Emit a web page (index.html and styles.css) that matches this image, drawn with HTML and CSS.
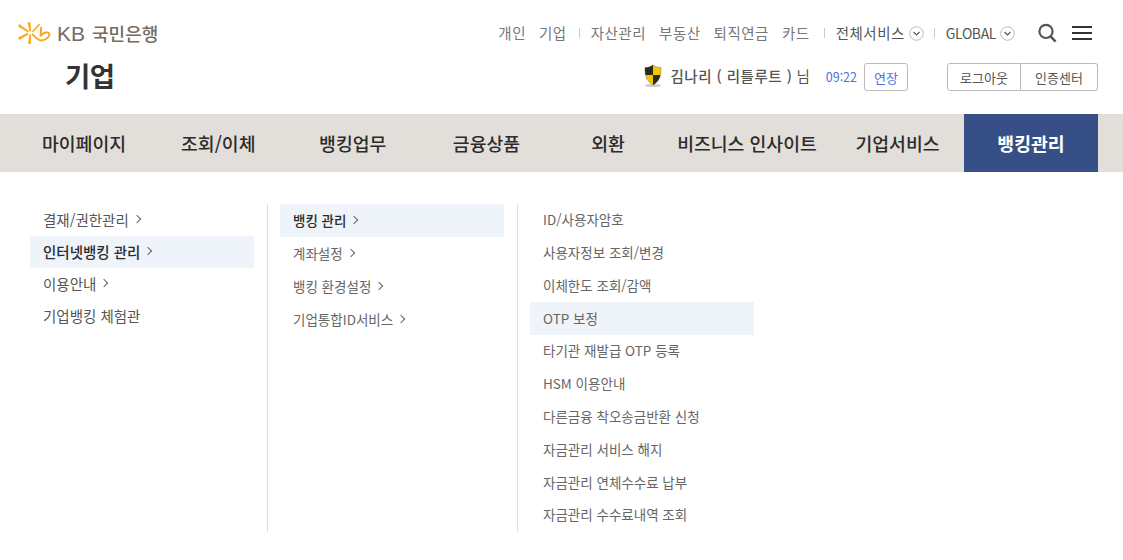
FILE: index.html
```html
<!DOCTYPE html>
<html lang="ko">
<head>
<meta charset="utf-8">
<title>KB국민은행 기업</title>
<link rel="stylesheet" href="styles.css">
</head>
<body>
<header class="header">
  <div class="brand">
    <div class="logo">
      <svg class="logo-mark" width="33" height="22" viewBox="0 0 33 22" aria-hidden="true">
        <g fill="#f9aa1d">
          <path d="M9.5 0 L12.5 0.5 L13 9.5 L11.5 9.5Z"/>
          <path d="M0 4.5 L1.2 2 L11 9 L10.4 10.5Z"/>
          <path d="M0 15.5 L1.2 18 L10.6 12.4 L10 10.8Z"/>
          <path d="M10 21.5 L13 22 L13 12.4 L11.4 12.2Z"/>
          <path d="M14 9.2 L21 1.6 L22.2 2.8 L15 10.6Z"/>
        </g>
        <path d="M14 12 C17 14 19 18.4 23 18.4 C27 18.4 31.4 15.4 31.4 12.6 C31.4 10 27.4 10 25 11.6 C23.4 12.8 22.6 14.2 22.6 14.2 L23.2 5" fill="none" stroke="#f9aa1d" stroke-width="2"/>
      </svg>
      <span class="logo-text"><span class="logo-kb">KB</span> 국민은행</span>
    </div>
    <div class="site-name">기업</div>
  </div>
  <div class="utility">
    <nav class="top-links">
      <a>개인</a><a>기업</a><i class="sep sep-a"></i><a>자산관리</a><a>부동산</a><a>퇴직연금</a><a>카드</a><i class="sep sep-b"></i>
      <a class="dark">전체서비스</a>
      <svg class="chev-circle c1" width="15" height="15" viewBox="0 0 15 15" aria-hidden="true"><circle cx="7.5" cy="7.5" r="6.8" fill="none" stroke="#bbb"/><path d="M4.5 6 L7.5 9 L10.5 6" fill="none" stroke="#555" stroke-width="1.1"/></svg>
      <i class="sep sep-c"></i>
      <a class="dark global">GLOBAL</a>
      <svg class="chev-circle c2" width="15" height="15" viewBox="0 0 15 15" aria-hidden="true"><circle cx="7.5" cy="7.5" r="6.8" fill="none" stroke="#bbb"/><path d="M4.5 6 L7.5 9 L10.5 6" fill="none" stroke="#555" stroke-width="1.1"/></svg>
      <svg class="search" width="19" height="20" viewBox="0 0 19 20" aria-hidden="true"><circle cx="8" cy="8.4" r="6.6" fill="none" stroke="#555" stroke-width="2.2"/><path d="M12.6 13.4 L17.6 18.6" stroke="#555" stroke-width="2.4"/></svg>
      <span class="burger"><i></i><i></i><i></i></span>
    </nav>
    <div class="session">
      <svg class="shield" width="20" height="24" viewBox="0 0 20 24" aria-hidden="true">
        <ellipse cx="10" cy="21.5" rx="8" ry="1.6" fill="#ccc"/>
        <path d="M10 1 C7.5 3 4.5 3.6 2 3.6 C2 11 2.5 16.5 10 21 C17.5 16.5 18 11 18 3.6 C15.5 3.6 12.5 3 10 1Z" fill="#f6c400" stroke="#8d8a70" stroke-width=".6"/>
        <path d="M10 1 C7.5 3 4.5 3.6 2 3.6 C2 6.5 2.1 9 2.6 11 L10 11Z" fill="#2a2a22"/>
        <path d="M10 11 L17.4 11 C16.6 14.6 14.8 18.1 10 21Z" fill="#2a2a22"/>
      </svg>
      <span class="user"><b>김나리 ( 리틀루트 )</b> 님</span>
      <span class="time">09:22</span>
      <button class="btn extend">연장</button>
      <span class="btn-group"><button class="btn">로그아웃</button><button class="btn">인증센터</button></span>
    </div>
  </div>
</header>
<nav class="gnb">
  <a>마이페이지</a><a>조회/이체</a><a>뱅킹업무</a><a>금융상품</a><a>외환</a><a>비즈니스 인사이트</a><a>기업서비스</a><a class="active">뱅킹관리</a>
</nav>
<main class="menus">
  <ul class="col col1">
    <li>결재/권한관리<span class="arrow"></span></li>
    <li class="on strong">인터넷뱅킹 관리<span class="arrow"></span></li>
    <li>이용안내<span class="arrow"></span></li>
    <li>기업뱅킹 체험관</li>
  </ul>
  <ul class="col col2">
    <li class="on strong">뱅킹 관리<span class="arrow"></span></li>
    <li>계좌설정<span class="arrow"></span></li>
    <li>뱅킹 환경설정<span class="arrow"></span></li>
    <li>기업통합ID서비스<span class="arrow"></span></li>
  </ul>
  <ul class="col col3">
    <li>ID/사용자암호</li>
    <li>사용자정보 조회/변경</li>
    <li>이체한도 조회/감액</li>
    <li class="on">OTP 보정</li>
    <li>타기관 재발급 OTP 등록</li>
    <li>HSM 이용안내</li>
    <li>다른금융 착오송금반환 신청</li>
    <li>자금관리 서비스 해지</li>
    <li>자금관리 연체수수료 납부</li>
    <li>자금관리 수수료내역 조회</li>
  </ul>
</main>
</body>
</html>
```
FILE: styles.css
```css
* { box-sizing: border-box; }
html, body { margin: 0; padding: 0; }
body {
  width: 1123px;
  height: 560px;
  overflow: hidden;
  background: #fff;
  color: #333;
  font-family: "Noto Sans CJK KR", "Noto Sans", sans-serif;
}
ul { list-style: none; margin: 0; padding: 0; }
button { font-family: inherit; }

.header { display: flex; justify-content: space-between; height: 114px; padding: 0 25px 0 18px; }
.brand { display: flex; flex-direction: column; }
.logo { display: flex; align-items: center; gap: 6px; height: 22px; margin-top: 22px; }
.logo-text { font-size: 18px; line-height: 22px; color: #746c62; font-weight: 500; white-space: nowrap; }
.logo-kb { font-family: "Liberation Sans", sans-serif; font-size: 21px; font-weight: 400; margin-right: 2px; }
.site-name { margin: 13px 0 0 47px; font-size: 27.5px; line-height: 36px; font-weight: 700; color: #333; letter-spacing: -0.5px; }

.utility { display: flex; flex-direction: column; align-items: flex-end; }
.top-links { display: flex; align-items: center; height: 22px; margin: 22px 6px 0 0; font-size: 14.5px; color: #777; letter-spacing: 0.5px; white-space: nowrap; }
.top-links a { margin-left: 13px; line-height: 22px; }
.top-links a.dark { color: #555; margin-left: 0; }
.sep { display: block; width: 1px; height: 10px; background: #ccc; }
.sep-a { margin-left: 12px; margin-right: -2px; }
.sep-b { margin-left: 14px; margin-right: 11px; }
.sep-c { margin-left: 10px; margin-right: 11px; }
.top-links a.global { font-size: 14px; letter-spacing: -0.4px; }
.chev-circle.c1 { margin-left: 4px; }
.chev-circle.c2 { margin-left: 4px; }
.search { margin-left: 23px; }
.burger { display: flex; flex-direction: column; gap: 4px; width: 20px; margin-left: 15px; }
.burger i { display: block; height: 2px; background: #333; }

.session { display: flex; align-items: center; height: 28px; margin-top: 19px; }
.shield { margin: -3px 7px 0 0; }
.user { font-size: 14.5px; color: #555; margin-right: 16px; padding-bottom: 3px; white-space: nowrap; }
.user b { font-weight: 500; letter-spacing: 0.5px; }
.time { font-size: 12.5px; color: #4a72e0; margin-right: 7px; padding-bottom: 1px; }
.btn { height: 28px; background: #fff; border: 1px solid #bbb; border-radius: 3px; font-size: 13px; color: #555; padding: 0; cursor: pointer; }
.btn.extend { width: 44px; color: #4a72e0; margin-right: 39px; }
.btn-group { display: flex; }
.btn-group .btn { width: 74px; }
.btn-group .btn:first-child { border-radius: 3px 0 0 3px; }
.btn-group .btn:last-child { width: 77px; border-left: 0; border-radius: 0 3px 3px 0; }

.gnb { display: grid; grid-template-columns: 134px 134.5px 134.5px 133px 110px 168px 133px 134px; height: 58px; padding-left: 17px; padding-right: 25px; background: #e2dfda; }
.gnb a { display: flex; align-items: center; justify-content: center; font-size: 18.3px; font-weight: 500; color: #2b2b2b; white-space: nowrap; }
.gnb a.active { background: #364f87; color: #fff; font-weight: 700; }

.menus { display: flex; padding: 32px 0 0 17px; }
.col { width: 250px; height: 328px; padding: 0 13px 0 12px; border-right: 1px solid #ddd; font-size: 13.5px; color: #666; }
.col li { display: flex; align-items: center; height: 32.78px; padding: 0 0 2px 13px; white-space: nowrap; }
.col1 { width: 251px; padding-left: 13px; font-size: 14.5px; color: #555; }
.col1 li { height: 32px; }
.col2 li { height: 33px; }
.col3 { border-right: 0; padding-right: 14px; }
.col li.on { background: #eff3fa; }
.col li.strong { color: #2b2b2b; font-weight: 500; }
.arrow { display: block; width: 6px; height: 6px; margin-left: 5px; border-top: 1px solid #666; border-right: 1px solid #666; transform: rotate(45deg); }
```
